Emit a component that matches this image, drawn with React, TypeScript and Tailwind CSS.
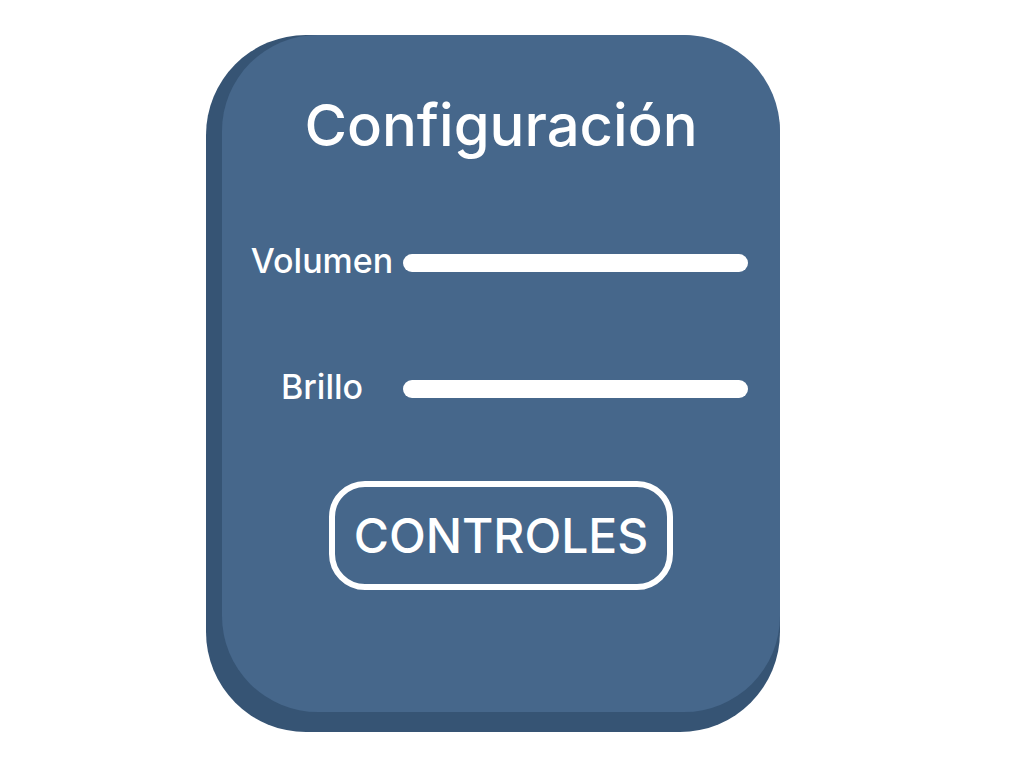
const sliders = [
  { label: "Volumen" },
  { label: "Brillo" },
];

function SliderRow({ label }: { label: string }) {
  return (
    <div className="flex h-[40px] items-center">
      <span className="mb-[4px] w-[150px] text-center text-[34px] font-medium leading-none text-white">
        {label}
      </span>
      <div className="ml-[6px] h-[18px] w-[345px] rounded-full bg-white" />
    </div>
  );
}

export default function App() {
  return (
    <div
      className="min-h-screen bg-white pl-[206px] pt-[35px]"
      style={{ fontFamily: "Inter, 'Noto Sans', sans-serif" }}
    >
      <div className="h-[697px] w-[574px] rounded-[100px] bg-[#365474] pb-[20px] pl-[16px]">
        <div className="flex h-full w-full flex-col rounded-[96px] bg-[#46678b]">
          <h1 className="mt-[54px] text-center text-[58px] font-medium leading-[72px] text-white">
            Configuración
          </h1>
          <div className="ml-[25px] mt-[82px] flex flex-col gap-[86px]">
            {sliders.map((s) => (
              <SliderRow key={s.label} label={s.label} />
            ))}
          </div>
          <div className="mt-[72px] flex justify-center">
            <button className="flex h-[109px] w-[344px] items-center justify-center rounded-[36px] border-[6px] border-white text-[48px] font-medium text-white">
              CONTROLES
            </button>
          </div>
        </div>
      </div>
    </div>
  );
}
